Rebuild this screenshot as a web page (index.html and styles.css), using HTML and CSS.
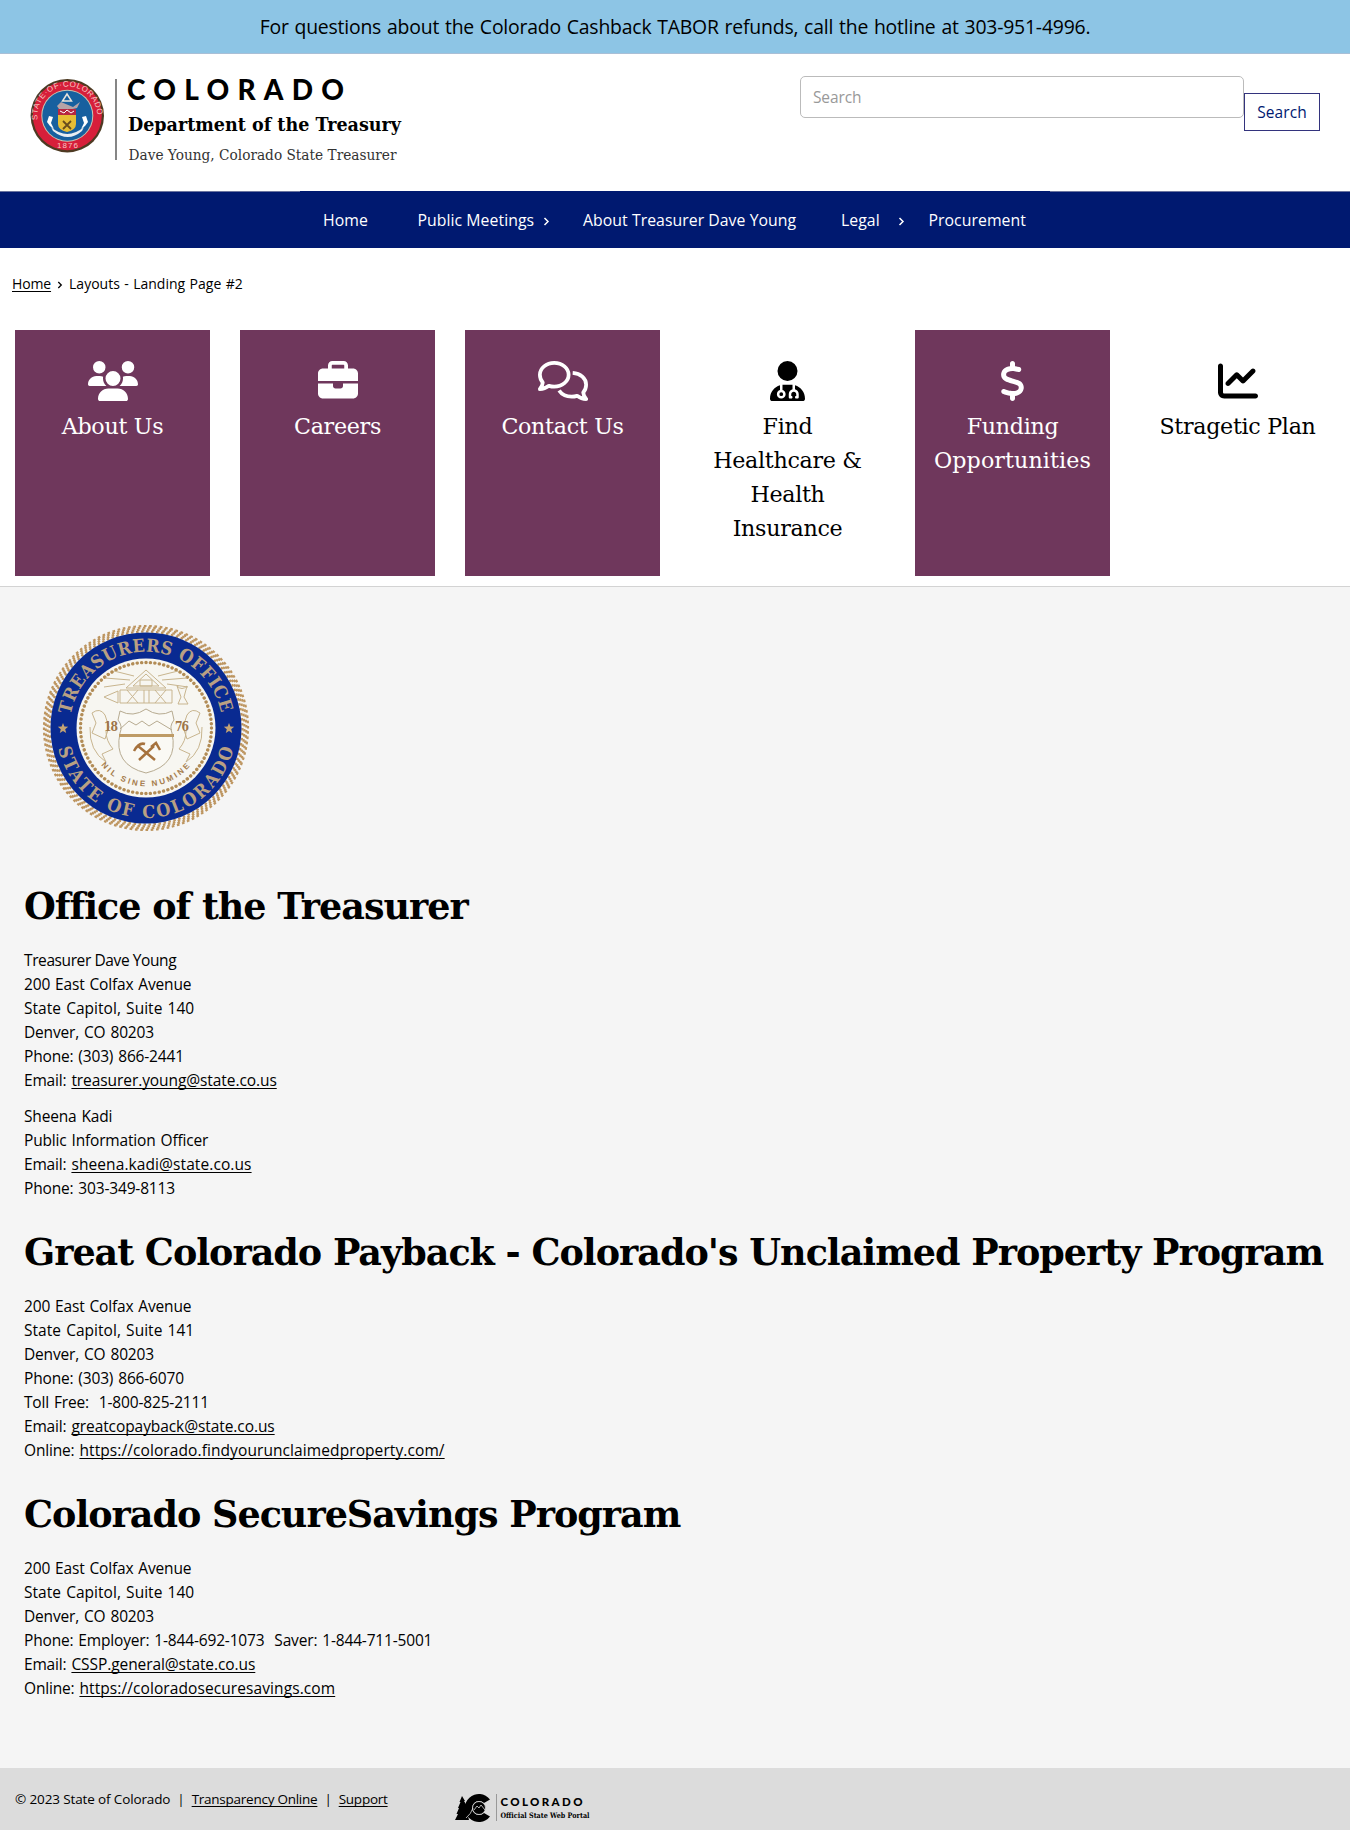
FILE: index.html
```html
<!DOCTYPE html>
<html lang="en">
<head>
<meta charset="utf-8">
<title>Layouts - Landing Page #2</title>
<link rel="stylesheet" href="styles.css">
</head>
<body>
<div class="banner"><span>For questions about the Colorado Cashback TABOR refunds, call the hotline at 303-951-4996.</span></div>

<header class="header">
  <svg class="logo" width="390" height="100" viewBox="20 70 390 100">
    <defs>
      <path id="sealTop" d="M37.5 120 A30 30 0 1 1 97.100 120"/>
    </defs>
    <circle cx="67.300" cy="115.700" r="36.700" fill="#4d3a22"/>
    <circle cx="67.300" cy="115.700" r="34.500" fill="#d71f3a"/>
    <circle cx="67.300" cy="115.700" r="26" fill="#c9c5b0"/>
    <circle cx="67.300" cy="115.700" r="25" fill="#17609f"/>
    <text class="seal-text" font-size="8"><textPath href="#sealTop" textLength="96">STATE·OF·COLORADO</textPath></text>
    <text class="seal-text" font-size="8" x="57" y="147.500" textLength="21">1876</text>
    <path d="M67 94l4.500 7h-9z" fill="none" stroke="#e9e4dc" stroke-width="1.500"/>
    <path d="M57 106l4-4 12 5 7-5-3 6-9 2-9-1z" fill="#b6a3a7"/>
    <path d="M58 109h18v6H58z" fill="#b72741"/>
    <path d="M60 111l4 2 3-3 4 3 3-2" stroke="#fff" fill="none"/>
    <path d="M58 115h18v9q0 6-9 8q-9-2-9-8z" fill="#e6be35"/>
    <path d="M63 121l8 8m0-8l-8 8" stroke="#684c1d" stroke-width="1.800"/>
    <path d="M49 116l4 1-2 6 3 6-4-3-3-4zm37 0l-4 1 2 6-3 6 4-3 3-4z" fill="#fff"/>
    <path d="M51 127q16 14 33 0l-2 4q-14 12-29 0z" fill="#e8edf2"/>
    <path d="M116 79v81" stroke="#444" stroke-width="1.300"/>
    <text class="logo-name" x="127" y="99.600" font-size="28" textLength="217">COLORADO</text>
    <text class="logo-dept" x="128" y="130.500" font-size="18.500" textLength="273" lengthAdjust="spacingAndGlyphs">Department of the Treasury</text>
    <text class="logo-sub" x="128.500" y="160" font-size="15.500" textLength="268" lengthAdjust="spacingAndGlyphs">Dave Young, Colorado State Treasurer</text>
  </svg>
  <form class="search">
    <input class="search-input" type="text" placeholder="Search">
    <button class="search-button" type="button">Search</button>
  </form>
</header>

<nav class="nav">
  <ul class="menu">
    <li class="item item-home">Home</li>
    <li class="item item-meetings">Public Meetings<svg class="chevron" width="7" height="9" viewBox="0 0 7 9"><path d="M1.500 1l3.500 3.500L1.500 8"/></svg></li>
    <li class="item item-about">About Treasurer Dave Young</li>
    <li class="item item-legal">Legal<svg class="chevron" width="7" height="9" viewBox="0 0 7 9"><path d="M1.500 1l3.500 3.500L1.500 8"/></svg></li>
    <li class="item">Procurement</li>
  </ul>
</nav>

<div class="breadcrumb"><a href="#">Home</a><svg class="chevron" width="6" height="8" viewBox="0 0 7 9"><path d="M1.500 1l3.500 3.500L1.500 8"/></svg><span>Layouts - Landing Page #2</span></div>

<section class="tiles">
  <div class="tile filled">
    <svg width="50" height="40" viewBox="0 0 640 512"><path d="M144 0a80 80 0 1 1 0 160A80 80 0 1 1 144 0zM512 0a80 80 0 1 1 0 160A80 80 0 1 1 512 0zM0 298.700C0 239.800 47.800 192 106.700 192h42.700c15.900 0 31 3.500 44.600 9.700c-1.300 7.200-1.900 14.700-1.900 22.300c0 38.200 16.800 72.500 43.300 96c-.2 0-.4 0-.7 0H21.300C9.600 320 0 310.400 0 298.700zM405.300 320c-.2 0-.4 0-.7 0c26.600-23.500 43.300-57.800 43.300-96c0-7.600-.7-15-1.900-22.300c13.600-6.300 28.700-9.700 44.600-9.700h42.700C592.200 192 640 239.800 640 298.700c0 11.800-9.600 21.300-21.300 21.300H405.300zM224 224a96 96 0 1 1 192 0 96 96 0 1 1 -192 0zM128 485.300C128 411.700 187.700 352 261.300 352H378.700C452.300 352 512 411.700 512 485.300c0 14.700-11.900 26.700-26.700 26.700H154.700c-14.700 0-26.700-11.900-26.700-26.700z"/></svg>
    <span>About Us</span>
  </div>
  <div class="tile filled">
    <svg width="40" height="40" viewBox="0 0 512 512"><path d="M184 48H328c4.400 0 8 3.600 8 8V96H176V56c0-4.400 3.600-8 8-8zm-56 8V96H64C28.700 96 0 124.700 0 160v96H192 320 512V160c0-35.300-28.700-64-64-64H384V56c0-30.900-25.100-56-56-56H184c-30.900 0-56 25.100-56 56zM512 288H320v32c0 17.700-14.300 32-32 32H224c-17.700 0-32-14.300-32-32V288H0V416c0 35.300 28.700 64 64 64H448c35.300 0 64-28.700 64-64V288z"/></svg>
    <span>Careers</span>
  </div>
  <div class="tile filled">
    <svg width="50" height="40" viewBox="0 0 640 512"><g fill="none" stroke="currentColor" stroke-width="48" stroke-linejoin="round" stroke-linecap="butt"><path d="M208 24C310 24 392 92 392 176S310 328 208 328C184 328 161 324 140 318C105 345 66 360 24 360C42 340 58 310 61 275C38 248 24 213 24 176C24 92 106 24 208 24z"/><path d="M444 153C545 160 616 222 616 304C616 341 602 376 579 403C582 438 598 468 616 488C574 488 535 473 500 446C479 452 456 456 432 456C362 456 302 426 270 378"/></g></svg>
    <span>Contact Us</span>
  </div>
  <div class="tile">
    <svg width="35" height="40" viewBox="0 0 448 512"><path d="M224 256a128 128 0 1 0 0-256 128 128 0 1 0 0 256zm-96 55.200C54 332.900 0 401.300 0 482.300C0 498.700 13.300 512 29.700 512H418.300c16.400 0 29.700-13.300 29.700-29.700c0-81-54-149.400-128-171.100V362c27.600 7.100 48 32.200 48 62v40c0 8.800-7.200 16-16 16H336c-8.800 0-16-7.200-16-16s7.200-16 16-16V424c0-17.700-14.300-32-32-32s-32 14.300-32 32v24c8.800 0 16 7.200 16 16s-7.200 16-16 16H256c-8.800 0-16-7.200-16-16V424c0-29.800 20.400-54.900 48-62V304.900c-6-.6-12.100-.9-18.300-.9H178.300c-6.200 0-12.300 .3-18.300 .9v65.400c23.100 6.900 40 28.300 40 53.700c0 30.900-25.100 56-56 56s-56-25.100-56-56c0-25.400 16.900-46.800 40-53.700V311.200zM144 448a24 24 0 1 0 0-48 24 24 0 1 0 0 48z"/></svg>
    <span>Find<br>Healthcare &amp;<br>Health<br>Insurance</span>
  </div>
  <div class="tile filled">
    <svg width="25" height="40" viewBox="0 0 320 512"><path d="M160 0c17.700 0 32 14.300 32 32V67.700c1.600 .2 3.100 .4 4.700 .7c.4 .1 .7 .1 1.100 .2l48 8.800c17.400 3.200 28.900 19.900 25.700 37.200s-19.900 28.900-37.200 25.700l-47.500-8.700c-31.300-4.600-58.900-1.500-78.300 6.200s-27.200 18.300-29 28.100c-2 10.700-.5 16.700 1.200 20.400c1.800 3.900 5.500 8.300 12.800 13.200c16.300 10.700 41.300 17.700 73.700 26.300l2.900 .8c28.600 7.600 63.600 16.800 89.600 33.800c14.200 9.300 27.600 21.900 35.900 39.500c8.500 17.900 10.300 37.900 6.400 59.200c-6.900 38-33.100 63.400-65.600 76.700c-13.700 5.600-28.600 9.200-44.400 11V480c0 17.700-14.300 32-32 32s-32-14.300-32-32V445.100c-.4-.1-.9-.1-1.300-.2l-.2 0 0 0c-24.400-3.800-64.500-14.300-91.500-26.300c-16.100-7.200-23.400-26.100-16.200-42.200s26.100-23.400 42.200-16.200c20.900 9.300 55.300 18.500 75.200 21.600c31.900 4.700 58.200 2 76-5.300c16.900-6.900 24.600-16.900 26.800-28.900c1.900-10.600 .4-16.700-1.300-20.400c-1.900-4-5.600-8.400-13-13.300c-16.400-10.700-41.500-17.700-74-26.300l-2.800-.7 0 0C119.400 279.300 84.400 270 58.400 253c-14.200-9.300-27.500-22-35.800-39.600c-8.400-17.900-10.100-37.900-6.100-59.200C23.700 116 52.300 91.200 84.800 78.300c13.300-5.300 27.900-8.900 43.200-11V32c0-17.700 14.300-32 32-32z"/></svg>
    <span>Funding<br><span class="wide">Opportunities</span></span>
  </div>
  <div class="tile">
    <svg width="40" height="40" viewBox="0 0 512 512"><path d="M64 64c0-17.700-14.300-32-32-32S0 46.300 0 64V400c0 44.200 35.800 80 80 80H480c17.700 0 32-14.300 32-32s-14.300-32-32-32H80c-8.800 0-16-7.200-16-16V64zm406.600 86.600c12.500-12.500 12.500-32.800 0-45.300s-32.800-12.500-45.300 0L320 210.700l-57.400-57.400c-12.500-12.500-32.800-12.500-45.300 0l-112 112c-12.500 12.500-12.500 32.800 0 45.300s32.800 12.500 45.300 0L240 221.300l57.400 57.400c12.500 12.500 32.800 12.500 45.300 0l128-128z"/></svg>
    <span>Stragetic Plan</span>
  </div>
</section>

<main class="content">
  <svg class="treasury-seal" width="210" height="210" viewBox="-105 -105 210 210">
    <defs>
      <path id="ringTop" d="M-75.300 -13.300A76.500 76.500 0 0 1 75.300 -13.300"/>
      <path id="ringBottom" d="M-87.700 20.200A90 90 0 0 0 87.700 20.200"/>
      <path id="motto" d="M-45 37A58 58 0 0 0 45 37"/>
    </defs>
    <g fill="none" stroke="#bd9560" stroke-width="2.200">
      <circle r="96.500" pathLength="480" stroke-dasharray="2 2"/>
      <circle r="98.400" pathLength="480" stroke-dasharray="2 2" stroke-dashoffset="-.8"/>
      <circle r="100.300" pathLength="480" stroke-dasharray="2 2" stroke-dashoffset="-1.600"/>
      <circle r="102" pathLength="480" stroke-dasharray="2 2" stroke-dashoffset="-2.400"/>
    </g>
    <circle r="95.500" fill="#092a91"/>
    <circle r="69.500" fill="#f7f6f1"/>
    <circle r="65.500" fill="none" stroke="#b28c56" stroke-width="3.400" stroke-linecap="round" pathLength="460" stroke-dasharray=".1 4.900"/>
    <text class="ring-text" font-size="18"><textPath href="#ringTop" textLength="211">TREASURERS OFFICE</textPath></text>
    <text class="ring-text" font-size="18"><textPath href="#ringBottom" textLength="241">STATE OF COLORADO</textPath></text>
    <path id="star" d="M-83-5l1.400 3.600 3.800.2-3 2.500 1 3.800-3.200-2.100-3.200 2.100 1-3.800-3-2.500 3.800-.2z" fill="#c3a374"/>
    <use href="#star" x="166"/>
    <g fill="none" stroke="#c8b58f" stroke-width="1">
      <path d="M0-58l20 18h-40zM0-54l13 12h-26zM-6-48h12v6h-12zM-12-52l-20-5m16 9l-25-2m20 6l-21 3m54-11l20-5m-16 9l25-2m-20 6l21 3M-42-31l14-6v12zM-26-38h52v13h-52zM-19-38l11 13m0-13l-11 13M-2-38v13m5-13v13M9-38l11 13m0-13L9-25M31-42q5 5 10 0l-3 11 4 7H32l3-7z"/>
      <path d="M-54-15q8-6 13 2l4 12-4 12-13-6 4-10zm-2 14q-1 24 16 35l-4-8 11-5q-7-8-7-18M54-15q-8-6-13 2L37-1l4 12 13-6-4-10zm2 14q1 24-16 35l4-8-11-5q7-8 7-18"/>
    </g>
    <path d="M0-19q-13 9-26 2l-2 9q5 6 2 13-7 32 26 40 33-8 26-40-3-7 2-13l-2-9q-13 7-26-2z" fill="#faf9f4" stroke="#b7ab91"/>
    <path d="M-26 1l9-8 7 4 6-4 7 5 8-5 15 9" fill="none" stroke="#b7ab91"/>
    <path d="M-27 6h55v3h-55z" fill="#be9b66"/>
    <path d="M-8 18L9 32M8 18L-7 32M-12 23q5-9 11-7M5 19l5-4 4 7" fill="none" stroke="#a6723d" stroke-width="2.500"/>
    <text class="seal-year" x="-42" y="3" font-size="12" textLength="14">18</text>
    <text class="seal-year" x="29" y="3" font-size="12" textLength="14">76</text>
    <text class="motto" font-size="8"><textPath href="#motto" textLength="101">NIL SINE NUMINE</textPath></text>
  </svg>

  <h2 class="h-office">Office of the Treasurer</h2>
  <p><span class="name">Treasurer Dave Young</span><br>200 East Colfax Avenue<br><span class="suite">State Capitol, Suite 140</span><br>Denver, CO 80203<br>Phone: (303) 866-2441<br>Email: <a href="#">treasurer.young@state.co.us</a></p>
  <p>Sheena Kadi<br>Public Information Officer<br>Email: <a class="url" href="#">sheena.kadi@state.co.us</a><br>Phone: 303-349-8113</p>

  <h2>Great Colorado Payback - Colorado's Unclaimed Property Program</h2>
  <p>200 East Colfax Avenue<br><span class="suite">State Capitol, Suite 141</span><br>Denver, CO 80203<br>Phone: (303) 866-6070<br>Toll Free:&nbsp; 1-800-825-2111<br>Email: <a href="#">greatcopayback@state.co.us</a><br>Online: <a class="url" href="#">https://colorado.findyourunclaimedproperty.com/</a></p>

  <h2>Colorado SecureSavings Program</h2>
  <p>200 East Colfax Avenue<br><span class="suite">State Capitol, Suite 140</span><br>Denver, CO 80203<br>Phone: Employer: 1-844-692-1073&nbsp; Saver: 1-844-711-5001<br>Email: <a href="#">CSSP.general@state.co.us</a><br>Online: <a class="url" href="#">https://coloradosecuresavings.com</a></p>
</main>

<footer class="footer">
  <div class="legal"><span>© 2023 State of Colorado</span><span>|</span><a href="#">Transparency Online</a><span>|</span><a href="#">Support</a></div>
  <svg class="portal" width="138" height="32" viewBox="454 1792 138 32">
    <path d="M462 1796l3 5-1 0 3 5-1 0 2 6-1 0 2 8h-14l3-6h-1.500l2.500-6h-1l2.500-6h-1z"/>
    <path d="M490 1799.500a14 14 0 1 0 0 17l-6-3.500a7 7 0 1 1 0-10z"/>
    <circle cx="479" cy="1808" r="6.500" fill="#000" stroke="#dcdcdc" stroke-width=".8"/>
    <path d="M466 1818q5-4 7-10m1 2l3-4 2 2 2-3 4 5" fill="none" stroke="#dcdcdc" stroke-width=".8"/>
    <path d="M496.500 1794v27" stroke="#999" stroke-width="1"/>
    <text class="logo-name" x="500.500" y="1806" font-size="11.500" textLength="82">COLORADO</text>
    <text class="logo-dept portal-sub" x="500.500" y="1817.500" font-size="7.500" textLength="89" lengthAdjust="spacingAndGlyphs">Official State Web Portal</text>
  </svg>
</footer>
</body>
</html>
```
FILE: styles.css
```css
* { box-sizing: border-box; }
body {
  margin: 0;
  background: #fff;
  color: #000;
  font: 15.5px/24px "Open Sans", "Noto Sans", sans-serif;
  letter-spacing: -0.13px;
}
a { color: inherit; text-decoration: underline; text-underline-offset: 2px; text-decoration-skip-ink: none; }
svg { display: block; flex: none; }

.banner {
  height: 54px;
  background: #8dc5e5;
  border-bottom: 1px solid #a9bfd6;
  text-align: center;
  font-size: 19.4px;
  line-height: 54px;
  white-space: nowrap;
  letter-spacing: -0.2px;
  word-spacing: 1px;
}

.header {
  display: flex;
  justify-content: space-between;
  height: 137px;
  padding: 16px 30px 0 20px;
}
.seal-text { font-family: "Liberation Sans", sans-serif; fill: #f6c6c2; letter-spacing: 0; }
.logo-name { font-family: Lato, sans-serif; font-weight: 900; letter-spacing: 0; }
.logo-dept { font-family: "DejaVu Serif", serif; font-weight: 700; letter-spacing: 0; }
.logo-sub { font-family: "DejaVu Serif", serif; fill: #333; letter-spacing: 0; }

.search { display: flex; align-items: flex-start; padding-top: 6px; }
.search-input {
  width: 444px;
  height: 42px;
  padding: 0 12px;
  border: 1px solid #bbb;
  border-radius: 5px;
  font: inherit;
  letter-spacing: inherit;
}
.search-input::placeholder { color: #999; }
.search-button {
  width: 76px;
  height: 38px;
  margin-top: 17px;
  padding: 0;
  border: 1px solid #33337d;
  background: #fff;
  color: #001970;
  font: inherit;
  letter-spacing: 0.1px;
}

.nav { height: 57px; background: #001970; color: #fff; border-top: 1px solid #6b749f; }
.menu {
  display: flex;
  width: 750px;
  height: 57px;
  margin: -1px auto 0;
  padding: 0 0 0 23px;
  background: #001970;
  list-style: none;
  font-size: 15.8px;
  line-height: 56px;
  letter-spacing: 0.05px;
  white-space: nowrap;
}
.item { display: flex; align-items: center; }
.item-home { width: 94.5px; }
.item-meetings { width: 165.5px; }
.item-about { width: 258px; }
.item-legal { width: 87.5px; }
.chevron { fill: none; stroke: currentColor; stroke-width: 1.5; }
.item-meetings .chevron { margin: 3px 0 0 9px; }
.item-legal .chevron { margin: 3px 0 0 18px; }

.breadcrumb {
  display: flex;
  align-items: center;
  height: 82px;
  padding: 0 12px 10px;
  font-size: 14px;
}
.breadcrumb .chevron { margin: 2px 6px 0; }
.breadcrumb span { letter-spacing: 0; word-spacing: 0.8px; }

.tiles {
  display: grid;
  grid-template-columns: repeat(6, 1fr);
  gap: 30px;
  height: 257px;
  padding: 0 15px 10px;
  border-bottom: 1px solid #d3d3d3;
}
.tile {
  display: flex;
  flex-direction: column;
  align-items: center;
  gap: 8px;
  padding-top: 31px;
  font: 22.2px/34px "DejaVu Serif", serif;
  text-align: center;
  letter-spacing: -0.3px;
  white-space: nowrap;
}
.tile svg { fill: currentColor; }
.wide { letter-spacing: 0.1px; }
.filled { background: #6f375c; color: #fff; }

.content { height: 1181px; padding: 36px 24px 0; background: #f5f5f5; }
.treasury-seal { margin-left: 17px; }
.ring-text, .seal-year { font-family: "DejaVu Serif Condensed", serif; font-weight: 700; fill: #b9a083; letter-spacing: 0; }
.seal-year { fill: #9d7448; }
.motto { font: 700 8px "Liberation Sans", sans-serif; fill: #a57c4b; letter-spacing: 0; }
.content h2 {
  margin: 29px 0 17px;
  font: 700 36.5px/48px "DejaVu Serif", serif;
  white-space: nowrap;
  letter-spacing: -1px;
}
.content .h-office { margin-top: 50px; }
.content p { margin: 0 0 12px; word-spacing: 1.1px; letter-spacing: -0.17px; }
.content a { letter-spacing: -0.08px; }
.content .url { letter-spacing: 0.09px; }
.name { letter-spacing: -0.4px; word-spacing: 0; }
.suite { letter-spacing: 0.03px; }

.footer {
  display: flex;
  height: 62px;
  padding: 24px 15px 0;
  background: #dcdcdc;
  font-size: 13.5px;
}
.legal { display: flex; gap: 7px; width: 439px; line-height: 15px; white-space: nowrap; }
.legal a { letter-spacing: -0.25px; }
```
